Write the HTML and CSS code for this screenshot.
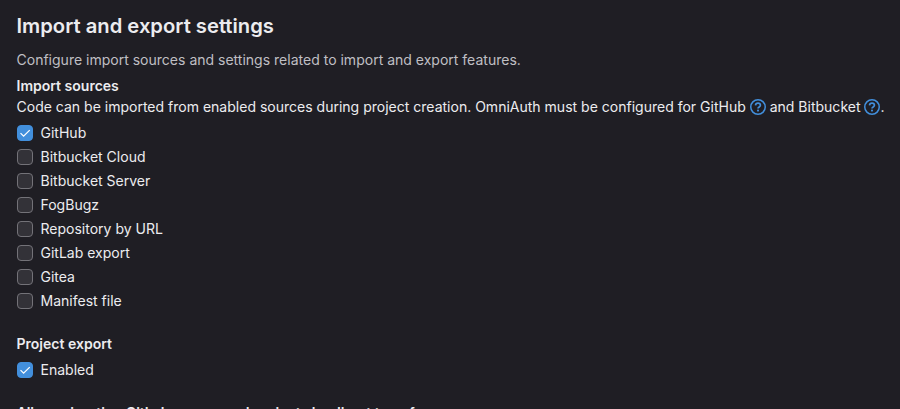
FILE: index.html
```html
<!DOCTYPE html>
<html lang="en">
<head>
<meta charset="utf-8">
<title>Import and export settings</title>
<link rel="stylesheet" href="styles.css">
</head>
<body>
<main class="settings">
  <h1 class="title">Import and export settings</h1>
  <p class="description">Configure import sources and settings related to import and export features.</p>
  <section class="group">
    <h2 class="label">Import sources</h2>
    <p class="help">Code can be imported from enabled sources during project creation. OmniAuth must be configured for GitHub <svg class="question" viewBox="0 0 16 16"><use href="#question"/></svg> and Bitbucket <svg class="question" viewBox="0 0 16 16"><use href="#question"/></svg>.</p>
    <ul class="options">
      <li class="option"><span class="box checked"><svg class="tick" viewBox="0 0 16 16"><use href="#tick"/></svg></span>GitHub</li>
      <li class="option"><span class="box"></span>Bitbucket Cloud</li>
      <li class="option"><span class="box"></span>Bitbucket Server</li>
      <li class="option"><span class="box"></span>FogBugz</li>
      <li class="option"><span class="box"></span>Repository by URL</li>
      <li class="option"><span class="box"></span>GitLab export</li>
      <li class="option"><span class="box"></span>Gitea</li>
      <li class="option"><span class="box"></span>Manifest file</li>
    </ul>
  </section>
  <section class="group">
    <h2 class="label">Project export</h2>
    <ul class="options">
      <li class="option"><span class="box checked"><svg class="tick" viewBox="0 0 16 16"><use href="#tick"/></svg></span>Enabled</li>
    </ul>
  </section>
  <section class="group">
    <h2 class="label">Allow migrating GitLab groups and projects by direct transfer</h2>
  </section>
</main>
<svg class="sprite">
  <symbol id="question" viewBox="0 0 16 16"><circle cx="8" cy="8" r="7.25" fill="none" stroke="currentColor" stroke-width="1.5"/><path d="M5.5 6.4C5.6 5 6.7 4.2 8 4.2s2.4.8 2.4 2.1c0 1.7-2.4 1.6-2.4 3.2" fill="none" stroke="currentColor" stroke-width="1.7"/><circle cx="8" cy="11.6" r="1.05" fill="currentColor"/></symbol>
  <symbol id="tick" viewBox="0 0 16 16"><path d="M2.9 8.2l3.5 3.4 7-6.9" fill="none" stroke="currentColor" stroke-width="1.4"/></symbol>
</svg>
</body>
</html>
```

FILE: styles.css
```css
* {
  box-sizing: border-box;
}

body {
  margin: 0;
  height: 409px;
  overflow: hidden;
  background: #1f1e24;
  color: #ececef;
  font: 14.02px/20px Inter, sans-serif;
}

.settings {
  padding: 13px 0 0 16.5px;
  white-space: nowrap;
}

.title,
.label,
.description,
.help,
.options {
  margin: 0;
  padding: 0;
}

.title {
  font-size: 20.2px;
  font-weight: 600;
  line-height: 26px;
}

.description {
  margin: 11px 0 6px;
  color: #bfbfc3;
}

.label {
  font-size: 14.03px;
  font-weight: 600;
  line-height: 20px;
}

.help {
  margin: 1px 0 4px;
  line-height: 20px;
}

.question {
  width: 16px;
  height: 16px;
  vertical-align: -3px;
  color: #428fdc;
}

.options {
  list-style: none;
}

.group {
  margin-bottom: 21px;
}

.label + .options {
  margin-top: 4px;
}

.option {
  display: flex;
  align-items: center;
  gap: 8px;
  height: 24px;
}

.box {
  width: 16px;
  height: 16px;
  border: 1px solid #737278;
  border-radius: 4px;
  background: #333238;
}

.checked {
  border-color: #428fdc;
  background: #428fdc;
  color: #fff;
}

.tick {
  display: block;
  width: 14px;
  height: 14px;
}

.sprite {
  position: absolute;
  width: 0;
  height: 0;
}
```
